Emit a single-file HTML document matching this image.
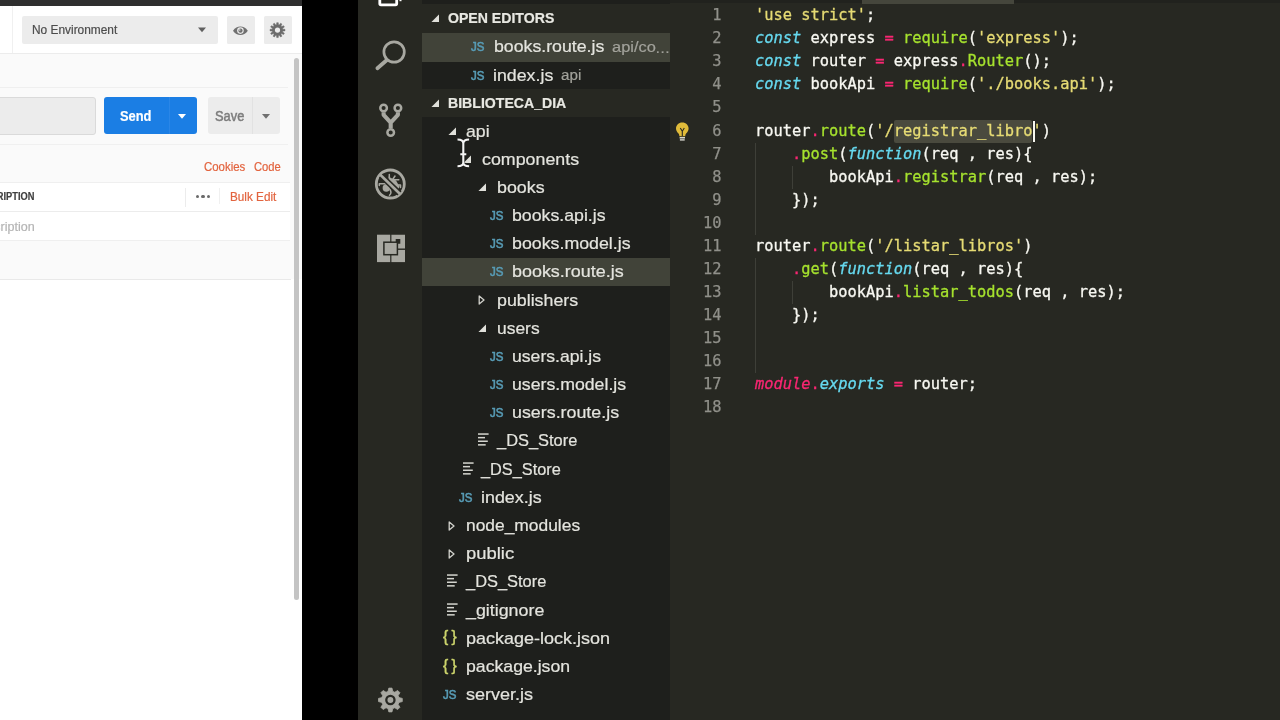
<!DOCTYPE html>
<html lang="es"><head><meta charset="utf-8"><title>books.route.js</title>
<style>
html,body{margin:0;padding:0;background:#000;}
body{width:1280px;height:720px;position:relative;overflow:hidden;font-family:"Liberation Sans",sans-serif;}
.a{position:absolute;}
.t{position:absolute;white-space:pre;line-height:20px;height:20px;transform-origin:0 50%;-webkit-text-stroke-width:0.2px;}
.code{position:absolute;left:755px;white-space:pre;font-family:"DejaVu Sans Mono","Liberation Mono",monospace;font-size:15.36px;line-height:23.04px;height:23.04px;color:#f8f8f2;letter-spacing:0;-webkit-text-stroke-width:0.3px;}
.ln{position:absolute;left:680px;width:41.5px;text-align:right;white-space:pre;font-family:"DejaVu Sans Mono","Liberation Mono",monospace;font-size:15.36px;line-height:23.04px;height:23.04px;color:#90908a;-webkit-text-stroke-width:0.25px;}
.k{color:#66d9ef;font-style:italic;}
.p{color:#f92672;}
.pi{color:#f92672;font-style:italic;}
.g{color:#a6e22e;}
.s{color:#e6db74;}
#root{position:absolute;left:0;top:0;width:1280px;height:720px;overflow:hidden;will-change:transform;}
</style></head><body><div id="root">

<div class="a" style="left:0;top:0;width:302px;height:720px;background:#ffffff;"></div>
<div class="a" style="left:0;top:0;width:302px;height:5.5px;background:#2f2f2f;"></div>
<div class="a" style="left:0;top:53px;width:302px;height:226px;background:#fafafa;"></div>
<div class="a" style="left:0;top:53px;width:302px;height:1px;background:#ececec;"></div>
<div class="a" style="left:12px;top:6px;width:1px;height:47px;background:#f0f0f0;"></div>
<div class="a" style="left:22px;top:16px;width:195.5px;height:28px;background:#ececec;border-radius:2px;"></div>
<svg class="a" style="left:197px;top:27px" width="10" height="6" viewBox="0 0 10 6"><path d="M1 0.6h8L5 5.2z" fill="#606060"/></svg>
<div class="a" style="left:227px;top:16px;width:27.7px;height:28px;background:#ececec;border-radius:1.5px;"></div>
<div class="a" style="left:264.3px;top:16px;width:28px;height:28px;background:#ececec;border-radius:1.5px;"></div>
<svg class="a" style="left:232px;top:24px" width="17" height="13" viewBox="0 0 17 13"><path d="M1 6.700C3 3.600 5.600 2.500 8.400 2.500s5.400 1.100 7.400 4.200C13.800 9.800 11.200 10.900 8.400 10.900S3 9.800 1 6.700z" fill="#707070"/><circle cx="8.400" cy="6.600" r="3.300" fill="#ececec"/><circle cx="8.500" cy="6.700" r="2.100" fill="#707070"/><circle cx="7.800" cy="6" r="0.700" fill="#ececec"/></svg>
<svg class="a" style="left:268px;top:20px" width="20" height="20" viewBox="0 0 20 20"><path d="M8.53 4.79 L8.72 2.64 L10.28 2.64 L10.47 4.79 L11.32 5.01 L12.55 3.25 L13.91 4.03 L13.00 5.98 L13.62 6.60 L15.57 5.69 L16.35 7.05 L14.59 8.28 L14.81 9.13 L16.96 9.32 L16.96 10.88 L14.81 11.07 L14.59 11.92 L16.35 13.15 L15.57 14.51 L13.62 13.60 L13.00 14.22 L13.91 16.17 L12.55 16.95 L11.32 15.19 L10.47 15.41 L10.28 17.56 L8.72 17.56 L8.53 15.41 L7.68 15.19 L6.45 16.95 L5.09 16.17 L6.00 14.22 L5.38 13.60 L3.43 14.51 L2.65 13.15 L4.41 11.92 L4.19 11.07 L2.04 10.88 L2.04 9.32 L4.19 9.13 L4.41 8.28 L2.65 7.05 L3.43 5.69 L5.38 6.60 L6.00 5.98 L5.09 4.03 L6.45 3.25 L7.68 5.01Z" fill="#6c6c6c" stroke="#6c6c6c" stroke-width="0.5" stroke-linejoin="round"/><circle cx="9.5" cy="10.1" r="2.6" fill="#ececec"/></svg>
<div class="a" style="left:294.2px;top:57.5px;width:5px;height:542px;background:#c4c4c4;border-radius:2.5px;"></div>
<div class="a" style="left:0;top:87px;width:288px;height:1px;background:#efefef;"></div>
<div class="a" style="left:-5px;top:97px;width:98.5px;height:36px;background:#ececec;border:1px solid #dadada;border-radius:3px;box-sizing:content-box;"></div>
<div class="a" style="left:104px;top:97px;width:93px;height:37px;background:#1b7ee4;border-radius:3px;"></div>
<div class="a" style="left:169px;top:97px;width:1px;height:37px;background:#2a86e7;"></div>
<svg class="a" style="left:177.3px;top:112.8px" width="10" height="7" viewBox="0 0 10 7"><path d="M1 1h8L5 5.8z" fill="#ffffff"/></svg>
<div class="a" style="left:208px;top:97px;width:72px;height:37px;background:#ececec;border-radius:3px;"></div>
<div class="a" style="left:252px;top:97px;width:1px;height:37px;background:#e2e2e2;"></div>
<svg class="a" style="left:261.3px;top:112.6px" width="10" height="7" viewBox="0 0 10 7"><path d="M1 1h8L5 5.8z" fill="#707070"/></svg>
<div class="a" style="left:0;top:144px;width:288px;height:1px;background:#f0f0f0;"></div>
<div class="a" style="left:0;top:182px;width:290px;height:58px;background:#ffffff;"></div>
<div class="a" style="left:0;top:182px;width:290px;height:1px;background:#efefef;"></div>
<div class="a" style="left:0;top:211px;width:290px;height:1px;background:#ececec;"></div>
<div class="a" style="left:0;top:240px;width:290px;height:1px;background:#efefef;"></div>
<div class="a" style="left:185px;top:188px;width:1px;height:19px;background:#ececec;"></div>
<div class="a" style="left:219px;top:188px;width:1px;height:16px;background:#f0f0f0;"></div>
<div class="a" style="left:195.60000000000002px;top:194.70000000000002px;width:3.4px;height:3.4px;border-radius:50%;background:#6a6a6a;"></div>
<div class="a" style="left:201.3px;top:194.70000000000002px;width:3.4px;height:3.4px;border-radius:50%;background:#6a6a6a;"></div>
<div class="a" style="left:207.0px;top:194.70000000000002px;width:3.4px;height:3.4px;border-radius:50%;background:#6a6a6a;"></div>
<div class="a" style="left:0;top:278.5px;width:291px;height:1px;background:#e9e9e9;"></div>
<div class="a" style="left:302px;top:0;width:56px;height:720px;background:#000;"></div>
<div class="a" style="left:358px;top:0;width:64px;height:720px;background:#272822;"></div>
<div class="a" style="left:422px;top:0;width:248px;height:720px;background:#1e1f1c;"></div>
<div class="a" style="left:670px;top:0;width:610px;height:720px;background:#272822;"></div>
<div class="a" style="left:670px;top:0;width:610px;height:3px;background:#21221e;"></div>
<div class="a" style="left:862px;top:0;width:152px;height:4px;background:#45463c;"></div>
<svg class="a" style="left:358px;top:0" width="64" height="720" viewBox="0 0 64 720">
<rect x="21.800" y="-14" width="16.900" height="18.800" rx="1.200" fill="none" stroke="#ffffff" stroke-width="2.800"/>
<rect x="41.5" y="0" width="2" height="1.2" fill="#ffffff"/>
<circle cx="36.1" cy="52" r="10.2" fill="none" stroke="#a8a8a1" stroke-width="2.7"/>
<path d="M28.6 60.200L19.4 68.200" stroke="#a8a8a1" stroke-width="3.8" stroke-linecap="round"/>
<g fill="none" stroke="#a8a8a1">
<circle cx="25.6" cy="108" r="3.3" stroke-width="2.5"/>
<circle cx="39.900" cy="108" r="3.3" stroke-width="2.5"/>
<circle cx="32.7" cy="132.5" r="3.3" stroke-width="2.5"/>
<path d="M25.6 112.2v2.600L32.7 122.600v5.700M39.900 112.200v2.600L32.7 122.600" stroke-width="4.1" stroke-linejoin="round"/>
</g>
<circle cx="32.3" cy="184" r="14" fill="none" stroke="#a8a8a1" stroke-width="2.800"/>
<g fill="#a8a8a1">
<circle cx="28.3" cy="188" r="3.700"/>
<path d="M30.200 176.500L33.500 184L40 190.500L41.500 186.500L38 180.500z"/>
</g>
<g fill="none" stroke="#a8a8a1" stroke-width="1.500" stroke-linecap="round" stroke-linejoin="round">
<path d="M31.300 174.600v5.500M37 176l-3 4.500M40.800 179.800h-5.500M42.500 187.500v-2.500h-5.500"/>
<path d="M21.300 185.500v-1.800h6.500M32 189.500c1.200 2 1 4.500-0.500 5.800"/>
</g>
<path d="M23 175.500L41.500 193.400" stroke="#272822" stroke-width="5.800"/>
<path d="M22 174.500L42.300 194.200" stroke="#a8a8a1" stroke-width="2.600"/>
<g fill="#a8a8a1">
<rect x="19" y="234.700" width="13.200" height="27.400"/>
<rect x="33.400" y="249.900" width="13.600" height="12.200"/>
<path d="M33.400 234.700H47V248.400H33.400zM37.700 239.100V243.800H42.300V239.100z" fill-rule="evenodd"/>
</g>
<rect x="25.900" y="242.200" width="13.500" height="12.500" fill="#a8a8a1" stroke="#272822" stroke-width="1.500"/>
<path d="M30.02 691.42 L30.80 688.11 L34.00 688.11 L34.78 691.42 L36.78 692.25 L39.68 690.46 L41.94 692.72 L40.15 695.62 L40.98 697.62 L44.29 698.40 L44.29 701.60 L40.98 702.38 L40.15 704.38 L41.94 707.28 L39.68 709.54 L36.78 707.75 L34.78 708.58 L34.00 711.89 L30.80 711.89 L30.02 708.58 L28.02 707.75 L25.12 709.54 L22.86 707.28 L24.65 704.38 L23.82 702.38 L20.51 701.60 L20.51 698.40 L23.82 697.62 L24.65 695.62 L22.86 692.72 L25.12 690.46 L28.02 692.25Z" fill="#a8a8a1" stroke="#a8a8a1" stroke-width="0.8" stroke-linejoin="round"/>
<circle cx="32.4" cy="700" r="4.100" fill="#a8a8a1" stroke="#272822" stroke-width="2.300"/>
</svg>
<div class="a" style="left:422px;top:3.8px;width:248px;height:29.2px;background:#272822;"></div>
<div class="a" style="left:422px;top:33px;width:248px;height:28.5px;background:#414339;"></div>
<div class="a" style="left:422px;top:88.7px;width:248px;height:28.6px;background:#272822;"></div>
<div class="a" style="left:422px;top:258px;width:248px;height:27.7px;background:#414339;"></div>
<svg class="a" style="left:431.3px;top:14.00px" width="8.4" height="8.4" viewBox="0 0 8 8"><path d="M7.6 0.400V7.600H0.400z" fill="#e0e0da"/></svg>
<svg class="a" style="left:431.3px;top:98.60px" width="8.4" height="8.4" viewBox="0 0 8 8"><path d="M7.6 0.400V7.600H0.400z" fill="#e0e0da"/></svg>
<span class="t" style="left:470.6px;top:37.35px;font-size:13.4px;font-weight:400;color:#589cb6;-webkit-text-stroke:0.6px #589cb6;transform:scaleX(0.86);">JS</span>
<span class="t" style="left:470.6px;top:65.65px;font-size:13.4px;font-weight:400;color:#589cb6;-webkit-text-stroke:0.6px #589cb6;transform:scaleX(0.86);">JS</span>
<span class="t" style="left:655px;top:38.1px;font-size:15.2px;color:#a2a29b;letter-spacing:-0.2px;">…</span>
<svg class="a" style="left:448.4px;top:126.60px" width="8.4" height="8.4" viewBox="0 0 8 8"><path d="M7.6 0.400V7.600H0.400z" fill="#e0e0da"/></svg>
<svg class="a" style="left:463.4px;top:154.78px" width="8.4" height="8.4" viewBox="0 0 8 8"><path d="M7.6 0.400V7.600H0.400z" fill="#e0e0da"/></svg>
<svg class="a" style="left:478.4px;top:182.96px" width="8.4" height="8.4" viewBox="0 0 8 8"><path d="M7.6 0.400V7.600H0.400z" fill="#e0e0da"/></svg>
<span class="t" style="left:489.6px;top:206.09px;font-size:13.4px;font-weight:400;color:#589cb6;-webkit-text-stroke:0.6px #589cb6;transform:scaleX(0.86);">JS</span>
<span class="t" style="left:489.6px;top:234.27px;font-size:13.4px;font-weight:400;color:#589cb6;-webkit-text-stroke:0.6px #589cb6;transform:scaleX(0.86);">JS</span>
<span class="t" style="left:489.6px;top:262.45px;font-size:13.4px;font-weight:400;color:#589cb6;-webkit-text-stroke:0.6px #589cb6;transform:scaleX(0.86);">JS</span>
<svg class="a" style="left:478.4px;top:295.18px" width="8" height="10" viewBox="0 0 8 10"><path d="M1.2 0.900L6 5L1.200 9.100z" fill="none" stroke="#d0d0ca" stroke-width="1.300" stroke-linejoin="round"/></svg>
<svg class="a" style="left:478.4px;top:323.86px" width="8.4" height="8.4" viewBox="0 0 8 8"><path d="M7.6 0.400V7.600H0.400z" fill="#e0e0da"/></svg>
<span class="t" style="left:489.6px;top:346.99px;font-size:13.4px;font-weight:400;color:#589cb6;-webkit-text-stroke:0.6px #589cb6;transform:scaleX(0.86);">JS</span>
<span class="t" style="left:489.6px;top:375.17px;font-size:13.4px;font-weight:400;color:#589cb6;-webkit-text-stroke:0.6px #589cb6;transform:scaleX(0.86);">JS</span>
<span class="t" style="left:489.6px;top:403.35px;font-size:13.4px;font-weight:400;color:#589cb6;-webkit-text-stroke:0.6px #589cb6;transform:scaleX(0.86);">JS</span>
<svg class="a" style="left:478px;top:433.48px" width="12" height="13" viewBox="0 0 12 13"><g fill="#d4d4ce"><rect x="0" y="0.300" width="10.600" height="1.500"/><rect x="0" y="3.900" width="7" height="1.500"/><rect x="0" y="7.500" width="9.800" height="1.500"/><rect x="0" y="11.100" width="7.700" height="1.500"/></g></svg>
<svg class="a" style="left:462.5px;top:461.66px" width="12" height="13" viewBox="0 0 12 13"><g fill="#d4d4ce"><rect x="0" y="0.300" width="10.600" height="1.500"/><rect x="0" y="3.900" width="7" height="1.500"/><rect x="0" y="7.500" width="9.800" height="1.500"/><rect x="0" y="11.100" width="7.700" height="1.500"/></g></svg>
<span class="t" style="left:458.6px;top:487.89px;font-size:13.4px;font-weight:400;color:#589cb6;-webkit-text-stroke:0.6px #589cb6;transform:scaleX(0.86);">JS</span>
<svg class="a" style="left:448.2px;top:520.62px" width="8" height="10" viewBox="0 0 8 10"><path d="M1.2 0.900L6 5L1.200 9.100z" fill="none" stroke="#d0d0ca" stroke-width="1.300" stroke-linejoin="round"/></svg>
<svg class="a" style="left:448.2px;top:548.80px" width="8" height="10" viewBox="0 0 8 10"><path d="M1.2 0.900L6 5L1.200 9.100z" fill="none" stroke="#d0d0ca" stroke-width="1.300" stroke-linejoin="round"/></svg>
<svg class="a" style="left:447px;top:574.38px" width="12" height="13" viewBox="0 0 12 13"><g fill="#d4d4ce"><rect x="0" y="0.300" width="10.600" height="1.500"/><rect x="0" y="3.900" width="7" height="1.500"/><rect x="0" y="7.500" width="9.800" height="1.500"/><rect x="0" y="11.100" width="7.700" height="1.500"/></g></svg>
<svg class="a" style="left:447px;top:602.56px" width="12" height="13" viewBox="0 0 12 13"><g fill="#d4d4ce"><rect x="0" y="0.300" width="10.600" height="1.500"/><rect x="0" y="3.900" width="7" height="1.500"/><rect x="0" y="7.500" width="9.800" height="1.500"/><rect x="0" y="11.100" width="7.700" height="1.500"/></g></svg>
<span class="t" style="left:443px;top:627.34px;font-size:15.6px;font-weight:400;color:#ccd46c;-webkit-text-stroke-width:0.45px;letter-spacing:3.3px;">{}</span>
<span class="t" style="left:443px;top:655.52px;font-size:15.6px;font-weight:400;color:#ccd46c;-webkit-text-stroke-width:0.45px;letter-spacing:3.3px;">{}</span>
<span class="t" style="left:442.6px;top:685.15px;font-size:13.4px;font-weight:400;color:#589cb6;-webkit-text-stroke:0.6px #589cb6;transform:scaleX(0.86);">JS</span>
<span id="t0" class="t" style="left:31.7px;top:20.24px;font-family:'Liberation Sans', sans-serif;font-size:12px;font-weight:400;color:#4c4c4c;transform:scaleX(0.9913);">No Environment</span>
<span id="t1" class="t" style="left:120.2px;top:106.21px;font-family:'Liberation Sans', sans-serif;font-size:14.7px;font-weight:700;color:#ffffff;transform:scaleX(0.8769);">Send</span>
<span id="t2" class="t" style="left:214.7px;top:106.21px;font-family:'Liberation Sans', sans-serif;font-size:14.7px;font-weight:400;color:#7c7c7c;transform:scaleX(0.8750);-webkit-text-stroke-width:0.5px;">Save</span>
<span id="t3" class="t" style="left:203.7px;top:156.54px;font-family:'Liberation Sans', sans-serif;font-size:12.3px;font-weight:400;color:#e2643f;transform:scaleX(0.9294);">Cookies</span>
<span id="t4" class="t" style="left:254.2px;top:156.54px;font-family:'Liberation Sans', sans-serif;font-size:12.3px;font-weight:400;color:#e2643f;transform:scaleX(0.9114);">Code</span>
<span id="t5" class="t" style="left:-28.7px;top:185.93px;font-family:'Liberation Sans', sans-serif;font-size:10.6px;font-weight:700;color:#404040;transform:scaleX(0.8756);">DESCRIPTION</span>
<span id="t6" class="t" style="left:229.7px;top:187.24px;font-family:'Liberation Sans', sans-serif;font-size:12.3px;font-weight:400;color:#e2643f;transform:scaleX(0.9540);">Bulk Edit</span>
<span id="t7" class="t" style="left:-27.9px;top:216.64px;font-family:'Liberation Sans', sans-serif;font-size:12.3px;font-weight:400;color:#b4b4b4;transform:scaleX(1.0176);">Description</span>
<span id="t8" class="t" style="left:447.7px;top:8.37px;font-family:'Liberation Sans', sans-serif;font-size:14.8px;font-weight:700;color:#e8e8e2;transform:scaleX(0.9528);">OPEN EDITORS</span>
<span id="t9" class="t" style="left:493.7px;top:37.31px;font-family:'Liberation Sans', sans-serif;font-size:17px;font-weight:400;color:#e4e4de;transform:scaleX(1.0421);">books.route.js</span>
<span id="t10" class="t" style="left:611.7px;top:37.03px;font-family:'Liberation Sans', sans-serif;font-size:15.2px;font-weight:400;color:#a2a29b;transform:scaleX(1.0806);">api/co</span>
<span id="t11" class="t" style="left:492.7px;top:65.61px;font-family:'Liberation Sans', sans-serif;font-size:17px;font-weight:400;color:#e4e4de;transform:scaleX(1.0461);">index.js</span>
<span id="t12" class="t" style="left:560.7px;top:65.33px;font-family:'Liberation Sans', sans-serif;font-size:15.2px;font-weight:400;color:#a2a29b;transform:scaleX(1.0009);">api</span>
<span id="t13" class="t" style="left:447.7px;top:93.07px;font-family:'Liberation Sans', sans-serif;font-size:14.8px;font-weight:700;color:#e8e8e2;transform:scaleX(0.9530);">BIBLIOTECA_DIA</span>
<span id="t14" class="t" style="left:465.7px;top:121.51px;font-family:'Liberation Sans', sans-serif;font-size:17px;font-weight:400;color:#e4e4de;transform:scaleX(1.0402);">api</span>
<span id="t15" class="t" style="left:481.7px;top:149.69px;font-family:'Liberation Sans', sans-serif;font-size:17px;font-weight:400;color:#e4e4de;transform:scaleX(1.0483);">components</span>
<span id="t16" class="t" style="left:497.2px;top:177.87px;font-family:'Liberation Sans', sans-serif;font-size:17px;font-weight:400;color:#e4e4de;transform:scaleX(1.0490);">books</span>
<span id="t17" class="t" style="left:512.2px;top:206.05px;font-family:'Liberation Sans', sans-serif;font-size:17px;font-weight:400;color:#e4e4de;transform:scaleX(1.0425);">books.api.js</span>
<span id="t18" class="t" style="left:512.2px;top:234.23px;font-family:'Liberation Sans', sans-serif;font-size:17px;font-weight:400;color:#e4e4de;transform:scaleX(1.0459);">books.model.js</span>
<span id="t19" class="t" style="left:512.2px;top:262.41px;font-family:'Liberation Sans', sans-serif;font-size:17px;font-weight:400;color:#e4e4de;transform:scaleX(1.0544);">books.route.js</span>
<span id="t20" class="t" style="left:497.2px;top:290.59px;font-family:'Liberation Sans', sans-serif;font-size:17px;font-weight:400;color:#e4e4de;transform:scaleX(1.0465);">publishers</span>
<span id="t21" class="t" style="left:497.2px;top:318.77px;font-family:'Liberation Sans', sans-serif;font-size:17px;font-weight:400;color:#e4e4de;transform:scaleX(1.0246);">users</span>
<span id="t22" class="t" style="left:512.2px;top:346.95px;font-family:'Liberation Sans', sans-serif;font-size:17px;font-weight:400;color:#e4e4de;transform:scaleX(1.0362);">users.api.js</span>
<span id="t23" class="t" style="left:512.2px;top:375.13px;font-family:'Liberation Sans', sans-serif;font-size:17px;font-weight:400;color:#e4e4de;transform:scaleX(1.0410);">users.model.js</span>
<span id="t24" class="t" style="left:512.2px;top:403.31px;font-family:'Liberation Sans', sans-serif;font-size:17px;font-weight:400;color:#e4e4de;transform:scaleX(1.0495);">users.route.js</span>
<span id="t25" class="t" style="left:496.5px;top:431.49px;font-family:'Liberation Sans', sans-serif;font-size:17px;font-weight:400;color:#e4e4de;transform:scaleX(0.9655);">_DS_Store</span>
<span id="t26" class="t" style="left:481.0px;top:459.67px;font-family:'Liberation Sans', sans-serif;font-size:17px;font-weight:400;color:#e4e4de;transform:scaleX(0.9595);">_DS_Store</span>
<span id="t27" class="t" style="left:481.2px;top:487.85px;font-family:'Liberation Sans', sans-serif;font-size:17px;font-weight:400;color:#e4e4de;transform:scaleX(1.0513);">index.js</span>
<span id="t28" class="t" style="left:465.7px;top:516.03px;font-family:'Liberation Sans', sans-serif;font-size:17px;font-weight:400;color:#e4e4de;transform:scaleX(1.0230);">node_modules</span>
<span id="t29" class="t" style="left:465.7px;top:544.21px;font-family:'Liberation Sans', sans-serif;font-size:17px;font-weight:400;color:#e4e4de;transform:scaleX(1.0828);">public</span>
<span id="t30" class="t" style="left:465.5px;top:572.39px;font-family:'Liberation Sans', sans-serif;font-size:17px;font-weight:400;color:#e4e4de;transform:scaleX(0.9655);">_DS_Store</span>
<span id="t31" class="t" style="left:465.5px;top:600.57px;font-family:'Liberation Sans', sans-serif;font-size:17px;font-weight:400;color:#e4e4de;transform:scaleX(1.0486);">_gitignore</span>
<span id="t32" class="t" style="left:465.7px;top:628.75px;font-family:'Liberation Sans', sans-serif;font-size:17px;font-weight:400;color:#e4e4de;transform:scaleX(1.0590);">package-lock.json</span>
<span id="t33" class="t" style="left:465.7px;top:656.93px;font-family:'Liberation Sans', sans-serif;font-size:17px;font-weight:400;color:#e4e4de;transform:scaleX(1.0391);">package.json</span>
<span id="t34" class="t" style="left:465.7px;top:685.11px;font-family:'Liberation Sans', sans-serif;font-size:17px;font-weight:400;color:#e4e4de;transform:scaleX(1.0601);">server.js</span>
<svg class="a" style="left:456px;top:138px" width="15" height="30" viewBox="0 0 15 30"><g fill="none"><path d="M1.500 1.500C4.800 1.500 7.300 2.400 7.300 5.500V24.500C7.300 27.400 4.800 28.200 1.500 28.200M13.100 1.500C9.800 1.500 7.300 2.400 7.300 5.500M7.300 24.500C7.300 27.400 9.800 28.200 13.100 28.200M4.300 16.200H10.300" stroke="#1a1a18" stroke-width="3.600" stroke-opacity="0.55"/><path d="M1.500 1.500C4.800 1.500 7.300 2.400 7.300 5.500V24.500C7.300 27.400 4.800 28.200 1.500 28.200M13.100 1.500C9.800 1.500 7.300 2.400 7.300 5.500M7.300 24.500C7.300 27.400 9.800 28.200 13.100 28.200M4.300 16.200H10.300" stroke="#f4f4f4" stroke-width="2.100"/></g></svg>
<div class="a" style="left:893.70px;top:120.20px;width:138.70px;height:22.64px;background:#4a4a3e;border-radius:2px;"></div>
<div class="a" style="left:755px;top:142.54px;width:1px;height:92.16px;background:#3e3f38;"></div>
<div class="a" style="left:792px;top:165.58px;width:1px;height:23.04px;background:#3e3f38;"></div>
<div class="a" style="left:755px;top:257.74px;width:1px;height:115.20px;background:#3e3f38;"></div>
<div class="a" style="left:792px;top:280.78px;width:1px;height:23.04px;background:#3e3f38;"></div>
<div class="ln" style="top:4.30px">1</div>
<div class="code" style="top:4.30px"><span class="s">'use strict'</span>;</div>
<div class="ln" style="top:27.34px">2</div>
<div class="code" style="top:27.34px"><span class="k">const</span> express <span class="p">=</span> <span class="g">require</span>(<span class="s">'express'</span>);</div>
<div class="ln" style="top:50.38px">3</div>
<div class="code" style="top:50.38px"><span class="k">const</span> router <span class="p">=</span> express<span class="p">.</span><span class="g">Router</span>();</div>
<div class="ln" style="top:73.42px">4</div>
<div class="code" style="top:73.42px"><span class="k">const</span> bookApi <span class="p">=</span> <span class="g">require</span>(<span class="s">'./books.api'</span>);</div>
<div class="ln" style="top:96.46px">5</div>
<div class="ln" style="top:119.50px">6</div>
<div class="code" style="top:119.50px">router<span class="p">.</span><span class="g">route</span>(<span class="s">'/registrar_libro'</span>)</div>
<div class="ln" style="top:142.54px">7</div>
<div class="code" style="top:142.54px">    <span class="p">.</span><span class="g">post</span>(<span class="k">function</span>(req , res){</div>
<div class="ln" style="top:165.58px">8</div>
<div class="code" style="top:165.58px">        bookApi<span class="p">.</span><span class="g">registrar</span>(req , res);</div>
<div class="ln" style="top:188.62px">9</div>
<div class="code" style="top:188.62px">    });</div>
<div class="ln" style="top:211.66px">10</div>
<div class="ln" style="top:234.70px">11</div>
<div class="code" style="top:234.70px">router<span class="p">.</span><span class="g">route</span>(<span class="s">'/listar_libros'</span>)</div>
<div class="ln" style="top:257.74px">12</div>
<div class="code" style="top:257.74px">    <span class="p">.</span><span class="g">get</span>(<span class="k">function</span>(req , res){</div>
<div class="ln" style="top:280.78px">13</div>
<div class="code" style="top:280.78px">        bookApi<span class="p">.</span><span class="g">listar_todos</span>(req , res);</div>
<div class="ln" style="top:303.82px">14</div>
<div class="code" style="top:303.82px">    });</div>
<div class="ln" style="top:326.86px">15</div>
<div class="ln" style="top:349.90px">16</div>
<div class="ln" style="top:372.94px">17</div>
<div class="code" style="top:372.94px"><span class="pi">module</span><span class="p">.</span><span class="k">exports</span> <span class="p">=</span> router;</div>
<div class="ln" style="top:395.98px">18</div>
<div class="a" style="left:1033.00px;top:120.70px;width:1.5px;height:20.84px;background:#f8f8f0;"></div>
<svg class="a" style="left:674px;top:121px" width="17" height="22" viewBox="0 0 17 22"><path d="M8.300 1.500C4.600 1.500 2 4.200 2 7.400c0 2.200 1.200 3.600 2.300 4.900c0.700 0.800 1 1.700 1.100 2.900h5.800c0.100-1.200 0.400-2.100 1.100-2.900c1.100-1.300 2.300-2.700 2.300-4.900C14.600 4.200 12 1.500 8.300 1.500z" fill="#e0bb3a"/><path d="M6.300 7l2 3.200l2-3.200M8.300 10v5" fill="none" stroke="#272822" stroke-width="1.100"/><rect x="5.600" y="16" width="5.400" height="1.500" fill="#d8d8d0"/><rect x="5.900" y="18.200" width="4.800" height="1.400" fill="#d8d8d0"/></svg>
</div></body></html>
